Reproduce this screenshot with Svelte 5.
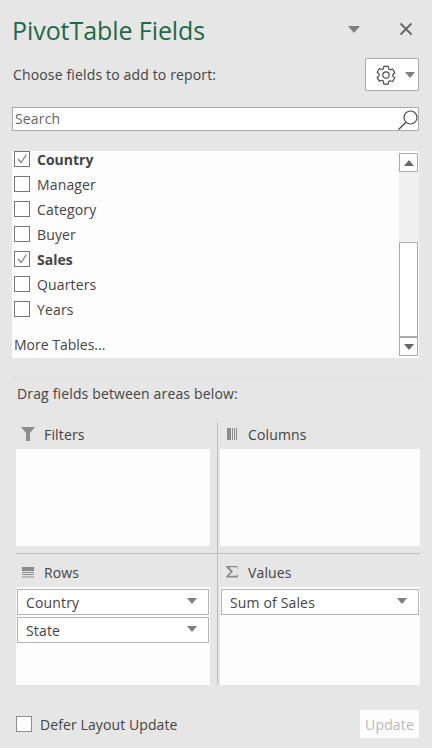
<script>
  const fields = [
    { name: 'Country', on: true },
    { name: 'Manager', on: false },
    { name: 'Category', on: false },
    { name: 'Buyer', on: false },
    { name: 'Sales', on: true },
    { name: 'Quarters', on: false },
    { name: 'Years', on: false }
  ];
</script>

<div class="pane">
  <header class="title-bar">
    <h1>PivotTable Fields</h1>
    <div class="title-tools">
      <svg class="tri-top" width="12" height="7" viewBox="0 0 12 7"><path d="M0 0h12L6 7z" fill="#7f7f7f"/></svg>
      <svg width="14" height="14" viewBox="0 0 14 14"><path d="M1.500 1.500l11 11M12.500 1.500l-11 11" stroke="#666" stroke-width="1.800" fill="none"/></svg>
    </div>
  </header>

  <div class="choose">
    <span>Choose fields to add to report:</span>
    <div class="gear-btn">
      <svg width="20" height="20" viewBox="0 0 22 22" fill="none" stroke="#4a4a4a" stroke-width="1.300" stroke-linejoin="round">
        <path d="M8.600 1.500h4.800l.6 2.900 1.500.9 2.800-.9 2.400 4.100-2.200 2v1.600l2.200 2-2.400 4.100-2.800-.9-1.500.9-.6 2.900H8.600L8 17.700l-1.500-.9-2.800.9-2.400-4.100 2.200-2V10l-2.200-2 2.400-4.100 2.800.9L8 4.400z"/>
        <circle cx="11" cy="11" r="3.500"/>
      </svg>
      <svg width="10" height="6" viewBox="0 0 10 6"><path d="M0 0h10L5 6z" fill="#7f7f7f"/></svg>
    </div>
  </div>

  <div class="search">
    <span>Search</span>
    <svg width="22" height="22" viewBox="0 0 22 22" fill="none" stroke="#4a4a4a" stroke-width="1.200"><circle cx="13.500" cy="8.500" r="6.500"/><path d="M9 13.200L1.500 20.500" stroke-width="1.400"/></svg>
  </div>

  <div class="list">
    <div class="list-body">
      <div class="rows">
        {#each fields as f}
          <div class="field" class:on={f.on}>
            <span class="box">
              {#if f.on}
                <svg width="14" height="14" viewBox="0 0 14 14"><path d="M3 7l3 3.500L11.500 2.500" fill="none" stroke="#808080" stroke-width="1.300"/></svg>
              {/if}
            </span>
            <span class="label">{f.name}</span>
          </div>
        {/each}
      </div>
      <div class="more">More Tables...</div>
    </div>
    <div class="scrollbar">
      <div class="sb-btn"><svg width="10" height="6" viewBox="0 0 10 6"><path d="M0 6h10L5 0z" fill="#666"/></svg></div>
      <div class="sb-track"></div>
      <div class="sb-thumb"></div>
      <div class="sb-btn"><svg width="10" height="6" viewBox="0 0 10 6"><path d="M0 0h10L5 6z" fill="#666"/></svg></div>
    </div>
  </div>

  <div class="dots"></div>
  <div class="drag">Drag fields between areas below:</div>

  <div class="areas">
    <section class="area left top">
      <div class="area-head">
        <svg class="ic" width="16" height="16" viewBox="0 0 16 16"><path d="M1 1h14L10 7v8H6V7z" fill="#8c8c8c"/></svg>
        <span class="label">Filters</span>
      </div>
      <div class="well"></div>
    </section>
    <section class="area right top">
      <div class="area-head">
        <svg class="ic" width="16" height="16" viewBox="0 0 16 16"><path d="M3 2h4v12H3z" fill="#8c8c8c"/><path d="M8.500 2v12M10.500 2v12M12.500 2v12" stroke="#8c8c8c"/></svg>
        <span class="label">Columns</span>
      </div>
      <div class="well"></div>
    </section>
    <section class="area left bottom">
      <div class="area-head">
        <svg class="ic" width="16" height="16" viewBox="0 0 16 16"><path d="M2 3h12v4H2z" fill="#8c8c8c"/><path d="M2 8.500h12M2 10.500h12M2 13h12" stroke="#8c8c8c"/></svg>
        <span class="label">Rows</span>
      </div>
      <div class="well">
        <div class="pill"><span class="label">Country</span><svg width="10" height="6" viewBox="0 0 10 6"><path d="M0 0h10L5 6z" fill="#7f7f7f"/></svg></div>
        <div class="pill"><span class="label">State</span><svg width="10" height="6" viewBox="0 0 10 6"><path d="M0 0h10L5 6z" fill="#7f7f7f"/></svg></div>
      </div>
    </section>
    <section class="area right bottom">
      <div class="area-head">
        <svg class="ic" width="16" height="16" viewBox="0 0 16 16"><path d="M2 2h11.500v3L12.500 3.300H5.200L9 7.500 4.800 11.700h8L14 10v3.500H2v-1.200L6.500 7.800 2 3z" fill="#8c8c8c"/></svg>
        <span class="label">Values</span>
      </div>
      <div class="well">
        <div class="pill"><span class="label">Sum of Sales</span><svg width="10" height="6" viewBox="0 0 10 6"><path d="M0 0h10L5 6z" fill="#7f7f7f"/></svg></div>
      </div>
    </section>
  </div>

  <footer class="foot">
    <label class="defer"><span class="box"></span><span class="label">Defer Layout Update</span></label>
    <div class="update">Update</div>
  </footer>
</div>

<style>
  :global(body) { margin: 0; background: #e6e6e6; }
  .pane {
    width: 432px; height: 748px; box-sizing: border-box; overflow: hidden;
    background: #e6e6e6; color: #444;
    font: 14px/20px "Open Sans", "Noto Sans", sans-serif;
    letter-spacing: 0.15px;
    display: flex; flex-direction: column;
  }
  .title-bar { height: 58px; padding: 0 19px 0 12px; display: flex; align-items: center; justify-content: space-between; box-sizing: border-box; }
  h1 { margin: 0 0 -2px; font-size: 25px; line-height: 32px; font-weight: 400; color: #1d6a48; letter-spacing: -0.07px; }
  .title-tools { display: flex; align-items: center; gap: 39px; }
  .choose { height: 33px; padding: 0 13px; display: flex; align-items: center; justify-content: space-between; }
  .gear-btn { width: 54px; height: 33px; box-sizing: border-box; border: 1px solid #ababab; background: #fff; display: flex; align-items: center; gap: 9px; padding-left: 10px; }
  .search { margin: 16px 13px 0 12px; height: 24px; box-sizing: border-box; border: 1px solid #ababab; background: #fff; display: flex; align-items: center; justify-content: space-between; padding-left: 2px; color: #666; }
  .search svg { margin-right: -1px; margin-top: 1px; }
  .list { margin: 20px 13px 0 12px; height: 207px; background: #fdfdfd; display: flex; overflow: hidden; }
  .list-body { flex: 1; overflow: hidden; }
  .rows { margin-top: -5px; }
  .field { height: 25px; display: flex; align-items: center; gap: 7px; padding-left: 2px; }
  .label { margin-top: 2px; }
  .field.on { font-weight: 700; letter-spacing: 0; }
  .box { width: 16px; height: 16px; box-sizing: border-box; border: 1px solid #777; background: #fff; display: inline-flex; align-items: center; justify-content: center; flex: none; }
  .more { margin-top: 11px; padding-left: 2px; line-height: 25px; letter-spacing: 0; }
  .scrollbar { width: 20px; padding-top: 2px; padding-bottom: 2px; display: flex; flex-direction: column; margin-right: 0; }
  .sb-btn { height: 19px; box-sizing: border-box; border: 1px solid #ababab; background: #fff; display: flex; align-items: center; justify-content: center; flex: none; margin-right: 1px; }
  .sb-track { height: 70px; background: #f0f0f0; }
  .sb-thumb { flex: 1; box-sizing: border-box; border: 1px solid #ababab; background: #fff; margin-right: 1px; }
  .dots { margin: 19px 9px 0 14px; height: 1px; background: repeating-linear-gradient(90deg, #c4c4c4 0 1px, transparent 1px 4px); }
  .drag { margin: 5px 0 0 17px; line-height: 22px; }
  .areas { margin: 18px 12px 0 16px; display: grid; grid-template-columns: 202px 202px; grid-template-rows: 131px 131px; }
  .area { display: flex; flex-direction: column; box-sizing: border-box; }
  .area.top { border-bottom: 1px solid #bdbdbd; padding-bottom: 7px; }
  .area.left { padding-right: 7px; border-right: 1px solid #bdbdbd; }
  .area.right { padding-left: 2px; }
  .area-head { height: 26px; flex: none; box-sizing: border-box; display: flex; align-items: center; padding: 0 0 4px 4px; gap: 8px; }
  .bottom .area-head { height: 33px; padding: 3px 0 0 4px; }
  .ic { flex: none; margin-top: -1px; }
  .well { flex: 1; background: #fdfdfd; padding: 2px 1px; display: flex; flex-direction: column; gap: 2px; }
  .pill { height: 26px; box-sizing: border-box; border: 1px solid #b4b4b4; background: #fff; display: flex; align-items: center; justify-content: space-between; padding: 0 11px 0 8px; }
  .pill svg { margin-top: -2px; }
  .foot { margin: 25px 13px 0 16px; height: 28px; display: flex; align-items: center; justify-content: space-between; }
  .defer { display: flex; align-items: center; gap: 8px; letter-spacing: 0.1px; }
  .defer .box { border-color: #8f8f8f; }
  .update { width: 59px; height: 28px; background: #fdfdfd; color: #b9b9b9; text-align: center; line-height: 30px; }
</style>
